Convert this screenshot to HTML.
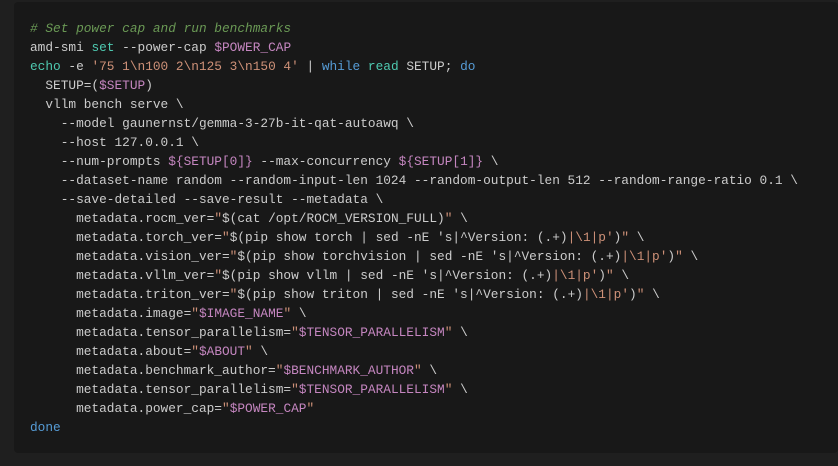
<!DOCTYPE html>
<html><head><meta charset="utf-8"><style>
html,body{margin:0;padding:0;background:#1f1f1f;width:838px;height:466px;overflow:hidden}
.box{position:absolute;left:14px;top:2px;width:824px;height:451px;background:#181818;border-radius:4px}
pre{position:absolute;left:30px;top:19px;margin:0;font-family:"Liberation Mono",monospace;font-size:12.8px;line-height:19.02px;color:#cccccc;white-space:pre}
.c{color:#6a9955;font-style:italic}.t{color:#4ec9b0}.v{color:#c586c0}.s{color:#ce9178}.k{color:#569cd6}
</style></head><body><div class="box"></div>
<pre><span class="c"># Set power cap and run benchmarks</span>
amd-smi <span class="t">set</span> --power-cap <span class="v">$POWER_CAP</span>
<span class="t">echo</span> -e <span class="s">'75 1\n100 2\n125 3\n150 4'</span> | <span class="k">while</span> <span class="t">read</span> SETUP; <span class="k">do</span>
  SETUP=(<span class="v">$SETUP</span>)
  vllm bench serve \
    --model gaunernst/gemma-3-27b-it-qat-autoawq \
    --host 127.0.0.1 \
    --num-prompts <span class="v">${SETUP[0]}</span> --max-concurrency <span class="v">${SETUP[1]}</span> \
    --dataset-name random --random-input-len 1024 --random-output-len 512 --random-range-ratio 0.1 \
    --save-detailed --save-result --metadata \
      metadata.rocm_ver=<span class="s">"</span>$(cat /opt/ROCM_VERSION_FULL)<span class="s">"</span> \
      metadata.torch_ver=<span class="s">"</span>$(pip show torch | sed -nE 's|^Version: (.+)<span class="s">|\1|p'</span>)<span class="s">"</span> \
      metadata.vision_ver=<span class="s">"</span>$(pip show torchvision | sed -nE 's|^Version: (.+)<span class="s">|\1|p'</span>)<span class="s">"</span> \
      metadata.vllm_ver=<span class="s">"</span>$(pip show vllm | sed -nE 's|^Version: (.+)<span class="s">|\1|p'</span>)<span class="s">"</span> \
      metadata.triton_ver=<span class="s">"</span>$(pip show triton | sed -nE 's|^Version: (.+)<span class="s">|\1|p'</span>)<span class="s">"</span> \
      metadata.image=<span class="s">"</span><span class="v">$IMAGE_NAME</span><span class="s">"</span> \
      metadata.tensor_parallelism=<span class="s">"</span><span class="v">$TENSOR_PARALLELISM</span><span class="s">"</span> \
      metadata.about=<span class="s">"</span><span class="v">$ABOUT</span><span class="s">"</span> \
      metadata.benchmark_author=<span class="s">"</span><span class="v">$BENCHMARK_AUTHOR</span><span class="s">"</span> \
      metadata.tensor_parallelism=<span class="s">"</span><span class="v">$TENSOR_PARALLELISM</span><span class="s">"</span> \
      metadata.power_cap=<span class="s">"</span><span class="v">$POWER_CAP</span><span class="s">"</span>
<span class="k">done</span></pre>
</body></html>
